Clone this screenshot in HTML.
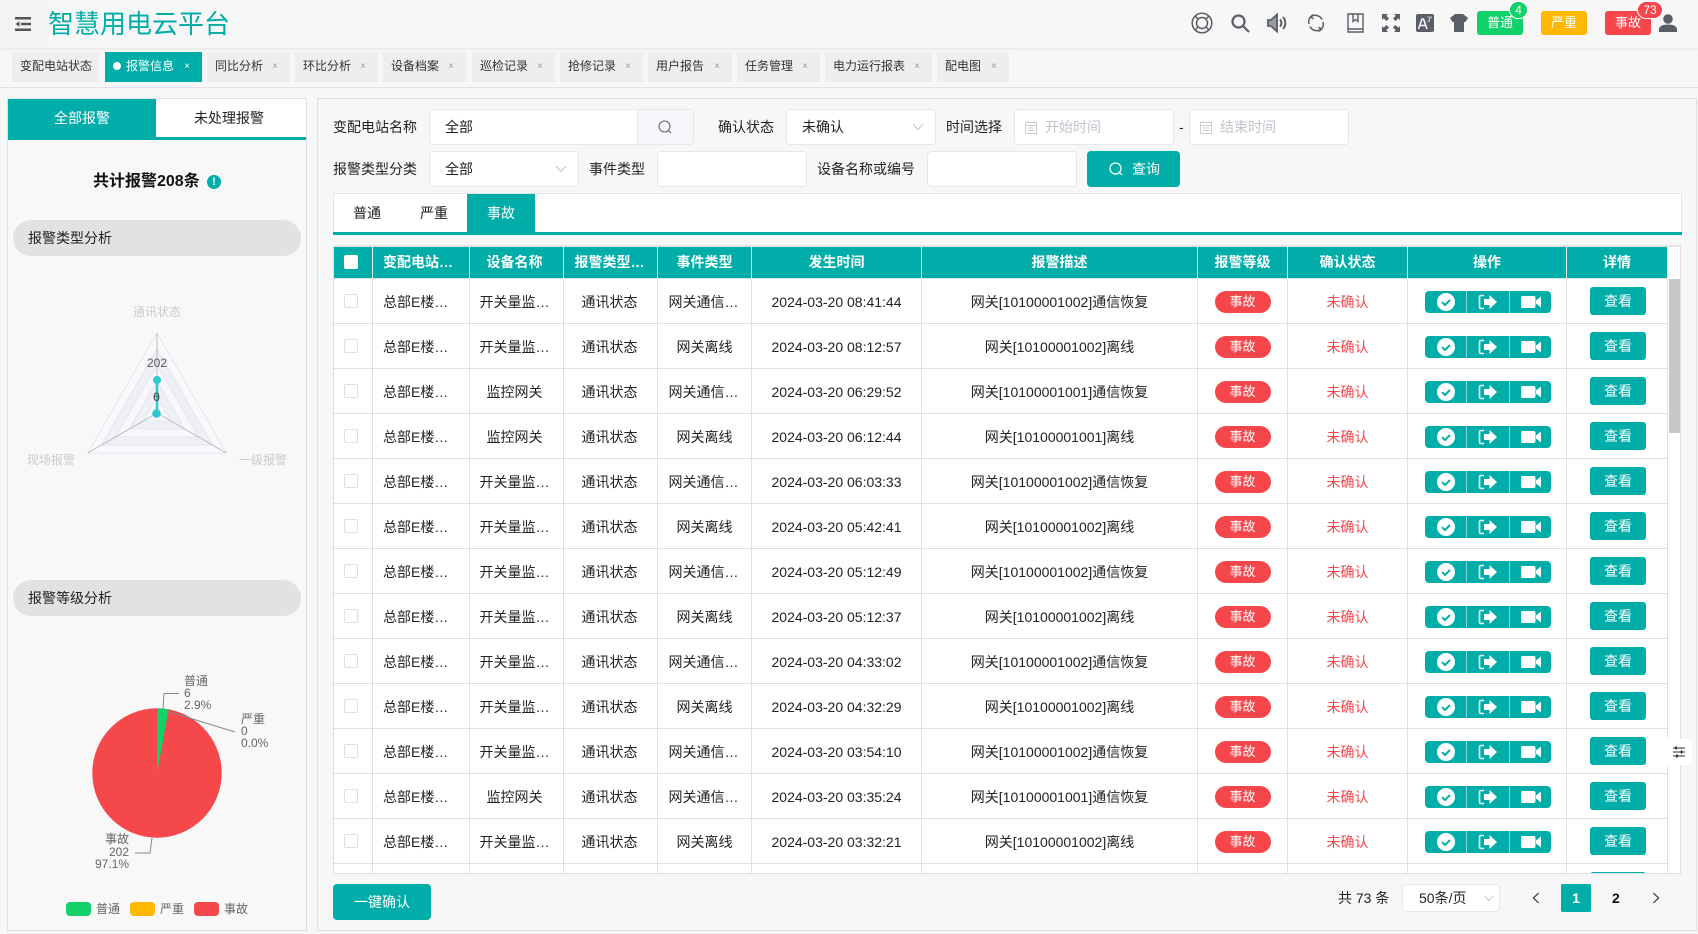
<!DOCTYPE html>
<html lang="zh-CN"><head><meta charset="utf-8"><title>智慧用电云平台</title>
<style>
*{box-sizing:border-box}
html,body{margin:0;padding:0}
body{width:1698px;height:934px;overflow:hidden;position:relative;background:#f7f7f7;font-family:"Liberation Sans","Noto Sans CJK SC",sans-serif;font-size:14px;color:#222}
.a{position:absolute}
.t{position:absolute;white-space:nowrap;line-height:20px}
.tab{position:absolute;top:52px;height:30px;background:#eee;font-size:12px;line-height:29px;padding-left:8px;color:#333;white-space:nowrap}
.tab i{position:absolute;right:12px;top:0;font-style:normal;font-size:10px;color:#999}
.inp{position:absolute;background:#fff;border:1px solid #e4e7ed;border-radius:4px}
.ico{position:absolute;display:block;overflow:visible}
.bd{position:absolute;top:11px;height:24px;border-radius:3px;color:#fff;text-align:center;line-height:24px;font-size:13px}
table{border-collapse:separate;border-spacing:0;table-layout:fixed;width:1334px}
th,td{padding:0;text-align:center;white-space:nowrap;overflow:hidden;box-sizing:border-box}
th{height:32px;background:#01ada8;color:#fff;font-weight:bold;border-right:1px solid #e8f6f5;border-bottom:1px solid #e0e0e0;font-size:14px;padding-bottom:2px}
td{height:45px;background:#fff;border-right:1px solid #e0e0e0;border-bottom:1px solid #e0e0e0;font-size:14px;color:#222;padding-top:2px}
th.l,td.l{text-align:left;padding-left:10px}
th.pr,td.pr{padding-right:4px}
th.p2,td.p2{padding-right:2px}
.cb{display:block;margin:0 auto;width:14px;height:14px;background:#fff;border:1px solid #dcdfe6;border-radius:2px;position:relative;left:-2px;top:-1px}
.lv{display:block;font-style:normal;margin:0 auto;width:56px;height:22px;line-height:22px;border-radius:11px;background:#f5474b;color:#fff;font-size:13px;position:relative;top:0}
.red{color:#f5474b}
.ops{display:flex;width:126px;height:22px;margin:-1px auto 0;background:#01ada8;border-radius:4px;position:relative;left:1px}
.ops span{display:flex;align-items:center;justify-content:center;height:22px}
.ops span+span{border-left:1px solid #7fd6d3}
.vw{display:block;width:56px;height:28px;line-height:29px;margin:0 auto;background:#01ada8;color:#fff;border-radius:3px;font-size:14px;position:relative;left:1px;top:-1px}
</style></head><body>
<svg width="0" height="0" style="position:absolute">
<symbol id="chk" viewBox="0 0 18 18"><circle cx="9" cy="9" r="9" fill="#fff"/><path d="M5 9.200l3 2.800 5-5" fill="none" stroke="#01ada8" stroke-width="2"/></symbol>
<symbol id="ext" viewBox="0 0 20 16"><path d="M6 1.500H3A1.500 1.500 0 0 0 1.500 3v10A1.500 1.500 0 0 0 3 14.500h3" fill="none" stroke="#fff" stroke-width="1.600"/><path d="M6 5h5.500V1L19 8l-7.500 7v-4H6z" fill="#fff"/></symbol>
<symbol id="vid" viewBox="0 0 20 12"><rect x="0" y="0" width="14.500" height="12" rx="2" fill="#fff"/><path d="M15 4.500L20 .5v11l-5-4z" fill="#fff"/></symbol>
<symbol id="chev" viewBox="0 0 12 8"><path d="M1 1l5 5.500L11 1" fill="none" stroke="#c6cad2" stroke-width="1.200"/></symbol>
<symbol id="cal" viewBox="0 0 12 14"><path d="M.5 2.500h11v11H.5zM.5 5.500h11M3 1v2M9 1v2M3 8h6M3 10.500h6" fill="none" stroke="#c9ccd3" stroke-width="1"/></symbol>
</svg>

<!-- header -->
<div class="a" style="left:0;top:0;width:1698px;height:48px;background:#f7f7f7;box-shadow:0 1px 3px rgba(0,0,0,.08)"></div>
<div class="a" style="left:0;top:0;width:48px;height:48px;background:#f3f3f3"></div>
<svg class="ico" style="left:15px;top:17px" width="16" height="14" viewBox="0 0 16 14"><path d="M0 0h16v2.500H0zM6 5.800h10v2.500H6zM0 11.500h16V14H0z" fill="#555"/><path d="M4.500 4.200v5.600L.5 7z" fill="#555"/></svg>
<div class="t" style="left:48px;top:6px;font-size:26px;line-height:36px;color:#01ada8">智慧用电云平台</div>

<svg class="ico" style="left:1191px;top:12px" width="22" height="22" viewBox="0 0 22 22" fill="none" stroke="#5a5e66" stroke-width="1.500"><circle cx="11" cy="11" r="9.800"/><circle cx="11" cy="11" r="5.500"/><path d="M4 4l3.500 3.500M18 4l-3.500 3.500M4 18l3.500-3.500M18 18l-3.500-3.500"/></svg>
<svg class="ico" style="left:1231px;top:14px" width="19" height="19" viewBox="0 0 19 19" fill="none" stroke="#5a5e66" stroke-width="2.200"><circle cx="7.500" cy="7.500" r="6"/><path d="M12 12l6 6"/></svg>
<svg class="ico" style="left:1267px;top:12px" width="21" height="22" viewBox="0 0 21 22" fill="none" stroke="#5a5e66" stroke-width="1.800"><path d="M1 8v6h3l6 5.500v-17L4 8z" fill="#9a9da3"/><path d="M13 7.500a5 5 0 0 1 0 7M16 5a9 9 0 0 1 0 12" stroke-width="2"/></svg>
<svg class="ico" style="left:1307px;top:13px" width="18" height="20" viewBox="0 0 18 20" fill="none" stroke="#5a5e66" stroke-width="1.500"><path d="M15 6.500A7.500 7.500 0 0 0 3.500 4 7.500 7.500 0 0 0 2 11M3 13.500A7.500 7.500 0 0 0 14.500 16 7.500 7.500 0 0 0 16 9"/><path d="M6 1.500L3.500 4l3 1.800M12 18.500L14.500 16l-3-1.800"/></svg>
<svg class="ico" style="left:1347px;top:13px" width="17" height="20" viewBox="0 0 17 20" fill="none" stroke="#5a5e66" stroke-width="1.400"><path d="M1 1h15v18H1zM1 16h15"/><path d="M6 1v7.500l2.500-2 2.500 2V1"/></svg>
<svg class="ico" style="left:1382px;top:14px" width="18" height="18" viewBox="0 0 18 18" fill="#5a5e66"><path d="M0 0h6L4.300 1.700 7 4.500 4.500 7 1.700 4.300 0 6zM18 0v6l-1.700-1.700L13.500 7 11 4.500l2.700-2.800L12 0zM0 18v-6l1.700 1.700L4.500 11 7 13.500l-2.700 2.800L6 18zM18 18h-6l1.700-1.700L11 13.500l2.500-2.500 2.800 2.700L18 12z"/></svg>
<svg class="ico" style="left:1416px;top:14px" width="18" height="18" viewBox="0 0 18 18"><rect width="18" height="18" rx="2" fill="#5a5e66"/><path d="M2.500 15L6 5h1.500L11 15M4 11.500h5.500" fill="none" stroke="#fff" stroke-width="1.500"/><path d="M11 3h5M13.500 3v5M11.500 8l4-5" fill="none" stroke="#ccc" stroke-width=".8"/></svg>
<svg class="ico" style="left:1450px;top:14px" width="18" height="18" viewBox="0 0 18 18"><path d="M5 0h8l5 4-2.500 4H14v10H4V8H2.500L0 4z" fill="#5a5e66"/></svg>

<div class="bd" style="left:1477px;width:46px;background:#13d16a">普通</div>
<div class="bd" style="left:1541px;width:46px;background:#ffb800">严重</div>
<div class="bd" style="left:1605px;width:46px;background:#f5474b">事故</div>
<div class="a" style="left:1509px;top:1px;width:19px;height:18px;border-radius:9px;background:#13d16a;border:1px solid #fff;color:#fff;font-size:12px;line-height:16px;text-align:center">4</div>
<div class="a" style="left:1637px;top:1px;width:26px;height:18px;border-radius:9px;background:#f5474b;border:1px solid #fff;color:#fff;font-size:12px;line-height:16px;text-align:center">73</div>
<svg class="ico" style="left:1659px;top:14px" width="18" height="18" viewBox="0 0 18 18" fill="#5a5e66"><circle cx="9" cy="5" r="4.800"/><path d="M0 18v-2.500C0 12.500 3 10.500 9 10.500s9 2 9 5V18z"/></svg>

<!-- tabs -->
<div class="a" style="left:0;top:87px;width:1698px;height:1px;background:#e2e2e2"></div>
<div class="tab" style="left:12px;width:87px">变配电站状态</div>
<div class="tab" style="left:105px;width:97px;background:#01ada8;color:#fff;padding-left:8px"><span style="display:inline-block;width:8px;height:8px;border-radius:4px;background:#fff;margin-right:5px;vertical-align:0"></span>报警信息<i style="color:#fff">×</i></div>
<div class="tab" style="left:207px;width:83px">同比分析<i>×</i></div>
<div class="tab" style="left:295px;width:83px">环比分析<i>×</i></div>
<div class="tab" style="left:383px;width:83px">设备档案<i>×</i></div>
<div class="tab" style="left:472px;width:83px">巡检记录<i>×</i></div>
<div class="tab" style="left:560px;width:83px">抢修记录<i>×</i></div>
<div class="tab" style="left:648px;width:84px">用户报告<i>×</i></div>
<div class="tab" style="left:737px;width:83px">任务管理<i>×</i></div>
<div class="tab" style="left:825px;width:107px">电力运行报表<i>×</i></div>
<div class="tab" style="left:937px;width:72px">配电图<i>×</i></div>

<!-- left panel -->
<div class="a" style="left:7px;top:98px;width:300px;height:833px;border:1px solid #e0e0e0;background:#f8f8f8"></div>
<div class="a" style="left:8px;top:99px;width:298px;height:41px;background:#01ada8"></div>
<div class="a" style="left:156px;top:99px;width:150px;height:38px;background:#fff"></div>
<div class="t" style="left:54px;top:108px;color:#fff">全部报警</div>
<div class="t" style="left:194px;top:108px">未处理报警</div>
<div class="t" style="left:93px;top:172px;font-size:16px;font-weight:bold;color:#111">共计报警208条</div>
<div class="a" style="left:207px;top:175px;width:14px;height:14px;border-radius:7px;background:#01ada8;color:#fff;font-size:11px;font-weight:bold;line-height:14px;text-align:center">!</div>
<div class="a" style="left:13px;top:220px;width:288px;height:36px;border-radius:18px;background:#e2e2e2"></div>
<div class="t" style="left:28px;top:228px">报警类型分析</div>
<div class="a" style="left:13px;top:580px;width:288px;height:36px;border-radius:18px;background:#e2e2e2"></div>
<div class="t" style="left:28px;top:588px">报警等级分析</div>

<svg class="a" style="left:0;top:290px" width="320" height="190" viewBox="0 290 320 190">
<polygon points="157,333 226.300,453 87.700,453" fill="#f9f8fa" stroke="#e0e6f1"/>
<polygon points="157,349 212.400,445 101.600,445" fill="#eef0f5" stroke="#e0e6f1"/>
<polygon points="157,365 198.600,437 115.400,437" fill="#f8f8fa" stroke="#e0e6f1"/>
<polygon points="157,381 184.700,429 129.300,429" fill="#eef0f5" stroke="#e0e6f1"/>
<polygon points="157,397 170.900,421 143.100,421" fill="#f8f8fa" stroke="#e0e6f1"/>
<path d="M157 413V333M157 413L87.700 453M157 413L226.300 453" stroke="#bbb" fill="none"/>
<path d="M157 380V413.500" stroke="#2ac9cf" stroke-width="2.500"/>
<circle cx="157" cy="380" r="4" fill="#2ac9cf"/><circle cx="156.500" cy="413.500" r="4.300" fill="#2ac9cf"/>
<g font-family="Liberation Sans,Noto Sans CJK SC,sans-serif" font-size="12" text-anchor="middle">
<text x="157" y="316" fill="#ccc">通讯状态</text><text x="51" y="464" fill="#ccc">现场报警</text><text x="263" y="464" fill="#ccc">一级报警</text>
<text x="157" y="367" fill="#555">202</text><text x="156.500" y="401" fill="#555">0</text><text x="156.500" y="401" fill="#555">6</text></g>
</svg>

<svg class="a" style="left:0;top:670px" width="320" height="260" viewBox="0 670 320 260">
<circle cx="157" cy="773" r="64.700" fill="#f5484a"/>
<path d="M157 773V708.300A64.700 64.700 0 0 1 168.700 709.400z" fill="#13d16a"/>
<path d="M163 709L164 693.500H179M170 712L235 732M152 838L150 853H135" fill="none" stroke="#888" stroke-width="1"/>
<g font-family="Liberation Sans,Noto Sans CJK SC,sans-serif" font-size="12" fill="#666">
<text x="184" y="685">普通</text><text x="184" y="697">6</text><text x="184" y="709">2.9%</text>
<text x="241" y="723">严重</text><text x="241" y="735">0</text><text x="241" y="747">0.0%</text>
<g text-anchor="end"><text x="129" y="843">事故</text><text x="129" y="856">202</text><text x="129" y="868">97.1%</text></g>
<text x="96" y="913">普通</text><text x="160" y="913">严重</text><text x="224" y="913">事故</text></g>
<rect x="66" y="902" width="25" height="14" rx="4" fill="#13d16a"/><rect x="130" y="902" width="25" height="14" rx="4" fill="#ffb800"/><rect x="194" y="902" width="25" height="14" rx="4" fill="#f5484a"/>
</svg>

<!-- right panel -->
<div class="a" style="left:317px;top:98px;width:1380px;height:833px;border:1px solid #e0e0e0;background:#f7f7f7"></div>
<div class="t" style="left:333px;top:117px">变配电站名称</div>
<div class="inp" style="left:429px;top:109px;width:265px;height:36px"></div>
<div class="a" style="left:637px;top:110px;width:56px;height:34px;background:#f5f7fa;border-left:1px solid #e4e7ed;border-radius:0 4px 4px 0"></div>
<svg class="ico" style="left:658px;top:120px" width="14" height="14" viewBox="0 0 14 14" fill="none" stroke="#666" stroke-width="1.100"><circle cx="6.500" cy="6.500" r="5.500"/><path d="M10.500 10.500l2.500 2.500"/></svg>
<div class="t" style="left:445px;top:117px">全部</div>
<div class="t" style="left:718px;top:117px">确认状态</div>
<div class="inp" style="left:786px;top:109px;width:150px;height:36px"></div>
<div class="t" style="left:802px;top:117px">未确认</div>
<svg class="ico" style="left:912px;top:123px" width="12" height="8"><use href="#chev"/></svg>
<div class="t" style="left:946px;top:117px">时间选择</div>
<div class="inp" style="left:1014px;top:109px;width:160px;height:36px"></div>
<svg class="ico" style="left:1025px;top:120px" width="12" height="14"><use href="#cal"/></svg>
<div class="t" style="left:1045px;top:117px;color:#c0c4cc">开始时间</div>
<div class="t" style="left:1179px;top:117px">-</div>
<div class="inp" style="left:1189px;top:109px;width:160px;height:36px"></div>
<svg class="ico" style="left:1200px;top:120px" width="12" height="14"><use href="#cal"/></svg>
<div class="t" style="left:1220px;top:117px;color:#c0c4cc">结束时间</div>

<div class="t" style="left:333px;top:159px">报警类型分类</div>
<div class="inp" style="left:429px;top:151px;width:150px;height:36px"></div>
<div class="t" style="left:445px;top:159px">全部</div>
<svg class="ico" style="left:555px;top:165px" width="12" height="8"><use href="#chev"/></svg>
<div class="t" style="left:589px;top:159px">事件类型</div>
<div class="inp" style="left:657px;top:151px;width:150px;height:36px"></div>
<div class="t" style="left:817px;top:159px">设备名称或编号</div>
<div class="inp" style="left:927px;top:151px;width:150px;height:36px"></div>
<div class="a" style="left:1087px;top:151px;width:93px;height:36px;background:#01ada8;border-radius:4px"></div>
<svg class="ico" style="left:1109px;top:162px" width="14" height="14" viewBox="0 0 14 14" fill="none" stroke="#fff" stroke-width="1.200"><circle cx="6.500" cy="6.500" r="5.500"/><path d="M10.500 10.500l2.500 2.500"/></svg>
<div class="t" style="left:1132px;top:159px;color:#fff">查询</div>

<!-- level tabs -->
<div class="a" style="left:333px;top:193px;width:1349px;height:42px;background:#fff;border:1px solid #e4e4e4;border-bottom:0"></div>
<div class="a" style="left:333px;top:232px;width:1349px;height:3px;background:#01ada8"></div>
<div class="a" style="left:467px;top:194px;width:68px;height:38px;background:#01ada8"></div>
<div class="t" style="left:353px;top:203px">普通</div>
<div class="t" style="left:420px;top:203px">严重</div>
<div class="t" style="left:487px;top:203px;color:#fff">事故</div>

<!-- table -->
<div class="a" style="left:333px;top:245px;width:1348px;height:629px;background:#fff;border-top:2px solid #e4e4e4;border-left:1px solid #e0e0e0;border-right:1px solid #e0e0e0;border-bottom:1px solid #e0e0e0;overflow:hidden">
<table>
<colgroup><col style="width:39px"><col style="width:97px"><col style="width:94px"><col style="width:94px"><col style="width:94px"><col style="width:170px"><col style="width:276px"><col style="width:90px"><col style="width:120px"><col style="width:159px"><col style="width:101px"></colgroup>
<tr><th><i class="cb" style="border-color:#fff;left:-2px;top:0"></i></th><th class="l">变配电站…</th><th class="pr">设备名称</th><th class="p2">报警类型…</th><th>事件类型</th><th>发生时间</th><th>报警描述</th><th>报警等级</th><th>确认状态</th><th>操作</th><th>详情</th></tr>
<tr><td><i class="cb"></i></td><td class="l">总部E楼…</td><td class="pr">开关量监…</td><td class="p2">通讯状态</td><td class="p2">网关通信…</td><td>2024-03-20 08:41:44</td><td>网关[10100001002]通信恢复</td><td><i class="lv">事故</i></td><td class="red">未确认</td><td><div class="ops"><span style="width:41px"><svg width="18" height="18"><use href="#chk"/></svg></span><span style="width:43px"><svg width="20" height="16"><use href="#ext"/></svg></span><span style="width:42px"><svg width="20" height="12"><use href="#vid"/></svg></span></div></td><td><span class="vw">查看</span></td></tr>
<tr><td><i class="cb"></i></td><td class="l">总部E楼…</td><td class="pr">开关量监…</td><td class="p2">通讯状态</td><td>网关离线</td><td>2024-03-20 08:12:57</td><td>网关[10100001002]离线</td><td><i class="lv">事故</i></td><td class="red">未确认</td><td><div class="ops"><span style="width:41px"><svg width="18" height="18"><use href="#chk"/></svg></span><span style="width:43px"><svg width="20" height="16"><use href="#ext"/></svg></span><span style="width:42px"><svg width="20" height="12"><use href="#vid"/></svg></span></div></td><td><span class="vw">查看</span></td></tr>
<tr><td><i class="cb"></i></td><td class="l">总部E楼…</td><td class="pr">监控网关</td><td class="p2">通讯状态</td><td class="p2">网关通信…</td><td>2024-03-20 06:29:52</td><td>网关[10100001001]通信恢复</td><td><i class="lv">事故</i></td><td class="red">未确认</td><td><div class="ops"><span style="width:41px"><svg width="18" height="18"><use href="#chk"/></svg></span><span style="width:43px"><svg width="20" height="16"><use href="#ext"/></svg></span><span style="width:42px"><svg width="20" height="12"><use href="#vid"/></svg></span></div></td><td><span class="vw">查看</span></td></tr>
<tr><td><i class="cb"></i></td><td class="l">总部E楼…</td><td class="pr">监控网关</td><td class="p2">通讯状态</td><td>网关离线</td><td>2024-03-20 06:12:44</td><td>网关[10100001001]离线</td><td><i class="lv">事故</i></td><td class="red">未确认</td><td><div class="ops"><span style="width:41px"><svg width="18" height="18"><use href="#chk"/></svg></span><span style="width:43px"><svg width="20" height="16"><use href="#ext"/></svg></span><span style="width:42px"><svg width="20" height="12"><use href="#vid"/></svg></span></div></td><td><span class="vw">查看</span></td></tr>
<tr><td><i class="cb"></i></td><td class="l">总部E楼…</td><td class="pr">开关量监…</td><td class="p2">通讯状态</td><td class="p2">网关通信…</td><td>2024-03-20 06:03:33</td><td>网关[10100001002]通信恢复</td><td><i class="lv">事故</i></td><td class="red">未确认</td><td><div class="ops"><span style="width:41px"><svg width="18" height="18"><use href="#chk"/></svg></span><span style="width:43px"><svg width="20" height="16"><use href="#ext"/></svg></span><span style="width:42px"><svg width="20" height="12"><use href="#vid"/></svg></span></div></td><td><span class="vw">查看</span></td></tr>
<tr><td><i class="cb"></i></td><td class="l">总部E楼…</td><td class="pr">开关量监…</td><td class="p2">通讯状态</td><td>网关离线</td><td>2024-03-20 05:42:41</td><td>网关[10100001002]离线</td><td><i class="lv">事故</i></td><td class="red">未确认</td><td><div class="ops"><span style="width:41px"><svg width="18" height="18"><use href="#chk"/></svg></span><span style="width:43px"><svg width="20" height="16"><use href="#ext"/></svg></span><span style="width:42px"><svg width="20" height="12"><use href="#vid"/></svg></span></div></td><td><span class="vw">查看</span></td></tr>
<tr><td><i class="cb"></i></td><td class="l">总部E楼…</td><td class="pr">开关量监…</td><td class="p2">通讯状态</td><td class="p2">网关通信…</td><td>2024-03-20 05:12:49</td><td>网关[10100001002]通信恢复</td><td><i class="lv">事故</i></td><td class="red">未确认</td><td><div class="ops"><span style="width:41px"><svg width="18" height="18"><use href="#chk"/></svg></span><span style="width:43px"><svg width="20" height="16"><use href="#ext"/></svg></span><span style="width:42px"><svg width="20" height="12"><use href="#vid"/></svg></span></div></td><td><span class="vw">查看</span></td></tr>
<tr><td><i class="cb"></i></td><td class="l">总部E楼…</td><td class="pr">开关量监…</td><td class="p2">通讯状态</td><td>网关离线</td><td>2024-03-20 05:12:37</td><td>网关[10100001002]离线</td><td><i class="lv">事故</i></td><td class="red">未确认</td><td><div class="ops"><span style="width:41px"><svg width="18" height="18"><use href="#chk"/></svg></span><span style="width:43px"><svg width="20" height="16"><use href="#ext"/></svg></span><span style="width:42px"><svg width="20" height="12"><use href="#vid"/></svg></span></div></td><td><span class="vw">查看</span></td></tr>
<tr><td><i class="cb"></i></td><td class="l">总部E楼…</td><td class="pr">开关量监…</td><td class="p2">通讯状态</td><td class="p2">网关通信…</td><td>2024-03-20 04:33:02</td><td>网关[10100001002]通信恢复</td><td><i class="lv">事故</i></td><td class="red">未确认</td><td><div class="ops"><span style="width:41px"><svg width="18" height="18"><use href="#chk"/></svg></span><span style="width:43px"><svg width="20" height="16"><use href="#ext"/></svg></span><span style="width:42px"><svg width="20" height="12"><use href="#vid"/></svg></span></div></td><td><span class="vw">查看</span></td></tr>
<tr><td><i class="cb"></i></td><td class="l">总部E楼…</td><td class="pr">开关量监…</td><td class="p2">通讯状态</td><td>网关离线</td><td>2024-03-20 04:32:29</td><td>网关[10100001002]离线</td><td><i class="lv">事故</i></td><td class="red">未确认</td><td><div class="ops"><span style="width:41px"><svg width="18" height="18"><use href="#chk"/></svg></span><span style="width:43px"><svg width="20" height="16"><use href="#ext"/></svg></span><span style="width:42px"><svg width="20" height="12"><use href="#vid"/></svg></span></div></td><td><span class="vw">查看</span></td></tr>
<tr><td><i class="cb"></i></td><td class="l">总部E楼…</td><td class="pr">开关量监…</td><td class="p2">通讯状态</td><td class="p2">网关通信…</td><td>2024-03-20 03:54:10</td><td>网关[10100001002]通信恢复</td><td><i class="lv">事故</i></td><td class="red">未确认</td><td><div class="ops"><span style="width:41px"><svg width="18" height="18"><use href="#chk"/></svg></span><span style="width:43px"><svg width="20" height="16"><use href="#ext"/></svg></span><span style="width:42px"><svg width="20" height="12"><use href="#vid"/></svg></span></div></td><td><span class="vw">查看</span></td></tr>
<tr><td><i class="cb"></i></td><td class="l">总部E楼…</td><td class="pr">监控网关</td><td class="p2">通讯状态</td><td class="p2">网关通信…</td><td>2024-03-20 03:35:24</td><td>网关[10100001001]通信恢复</td><td><i class="lv">事故</i></td><td class="red">未确认</td><td><div class="ops"><span style="width:41px"><svg width="18" height="18"><use href="#chk"/></svg></span><span style="width:43px"><svg width="20" height="16"><use href="#ext"/></svg></span><span style="width:42px"><svg width="20" height="12"><use href="#vid"/></svg></span></div></td><td><span class="vw">查看</span></td></tr>
<tr><td><i class="cb"></i></td><td class="l">总部E楼…</td><td class="pr">开关量监…</td><td class="p2">通讯状态</td><td>网关离线</td><td>2024-03-20 03:32:21</td><td>网关[10100001002]离线</td><td><i class="lv">事故</i></td><td class="red">未确认</td><td><div class="ops"><span style="width:41px"><svg width="18" height="18"><use href="#chk"/></svg></span><span style="width:43px"><svg width="20" height="16"><use href="#ext"/></svg></span><span style="width:42px"><svg width="20" height="12"><use href="#vid"/></svg></span></div></td><td><span class="vw">查看</span></td></tr>
<tr><td></td><td></td><td></td><td></td><td></td><td></td><td></td><td></td><td></td><td></td><td><span class="vw">查看</span></td></tr>
</table>
<div class="a" style="left:1335px;top:32px;width:12px;height:154px;background:#c8c8c8"></div>
</div>

<!-- filter widget -->
<div class="a" style="left:1667px;top:739px;width:25px;height:26px;background:#fff;border-radius:0 6px 6px 0"></div>
<svg class="ico" style="left:1673px;top:746px" width="12" height="12" viewBox="0 0 12 12" fill="none" stroke="#333" stroke-width="1.200"><path d="M0 2h12M0 6h12M0 10h12" stroke="#555"/><path d="M3 .5v3M8.500 4.500v3M4 8.500v3" stroke="#111" stroke-width="1.500"/></svg>

<!-- footer -->
<div class="a" style="left:333px;top:884px;width:98px;height:36px;background:#01ada8;border-radius:4px;color:#fff;text-align:center;line-height:36px">一键确认</div>
<div class="t" style="left:1338px;top:888px">共 73 条</div>
<div class="inp" style="left:1402px;top:884px;width:98px;height:28px"></div>
<div class="t" style="left:1419px;top:888px">50条/页</div>
<svg class="ico" style="left:1484px;top:895px" width="10" height="7"><use href="#chev"/></svg>
<svg class="ico" style="left:1532px;top:892px" width="8" height="12" viewBox="0 0 8 12"><path d="M6.500 1L1.500 6l5 5" fill="none" stroke="#333" stroke-width="1.200"/></svg>
<div class="a" style="left:1561px;top:884px;width:30px;height:28px;background:#01ada8;border-radius:2px;color:#fff;font-weight:bold;text-align:center;line-height:28px">1</div>
<div class="t" style="left:1612px;top:888px;font-weight:bold;color:#111">2</div>
<svg class="ico" style="left:1652px;top:892px" width="8" height="12" viewBox="0 0 8 12"><path d="M1.500 1l5 5-5 5" fill="none" stroke="#333" stroke-width="1.200"/></svg>
</body></html>
